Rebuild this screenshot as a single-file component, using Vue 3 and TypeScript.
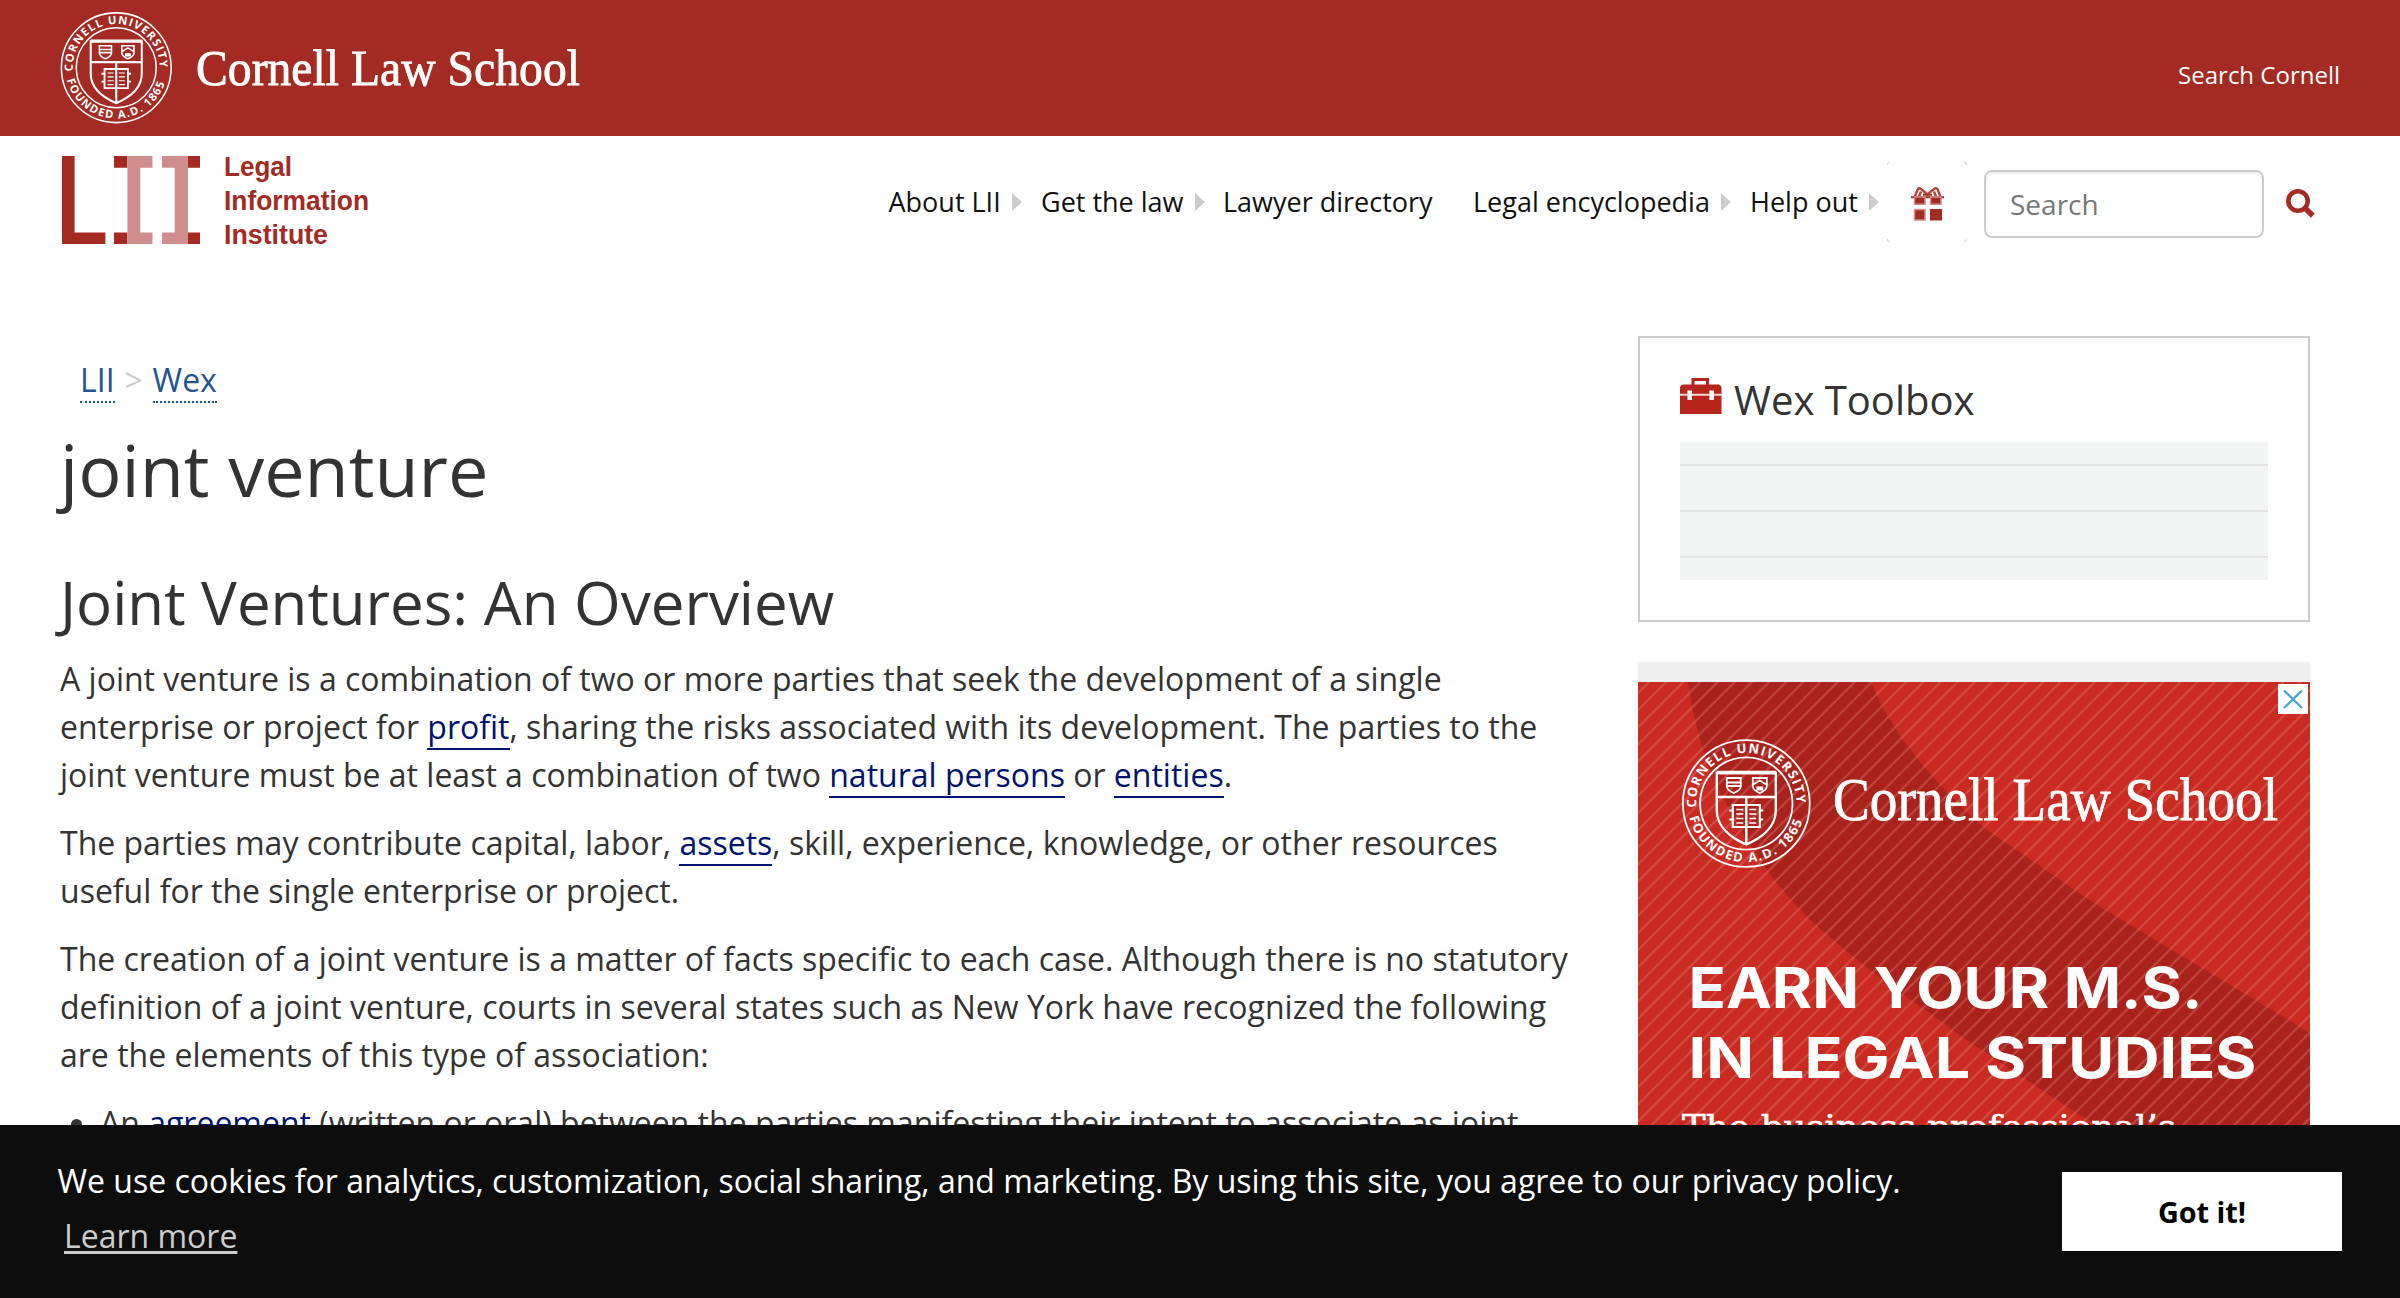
<script setup lang="ts">
interface NavItem { label: string; arrow: boolean; width: number }
const nav: NavItem[] = [
  { label: 'About LII', arrow: true, width: 152.5 },
  { label: 'Get the law', arrow: true, width: 182 },
  { label: 'Lawyer directory', arrow: false, width: 250 },
  { label: 'Legal encyclopedia', arrow: true, width: 277 },
  { label: 'Help out', arrow: true, width: 137 },
]
</script>

<template>
  <div class="page">
    <svg class="defs" width="0" height="0" aria-hidden="true">
      <defs>
        <symbol id="seal" viewBox="-65 -65 130 130">
          <path id="arc-top" d="M-50 4A50.200 50.200 0 1 1 50 4" fill="none" />
          <path id="arc-bottom" d="M-57 14A58.700 58.700 0 0 0 57 14" fill="none" />
          <g fill="none" stroke="#fff">
            <circle r="63.4" stroke-width="1.8" />
            <circle r="46.2" stroke-width="1.8" />
            <path d="M-29.5-30.5H29.5V7C29.5 24 14 35 0 41C-14 35-29.5 24-29.5 7ZM-29.5-6.5H29.5M0-6.5V41" stroke-width="2.4" />
            <path d="M-29.5-31H29.5" stroke-width="3.4" />
            <path d="M-19.5-25.5H-5.5V-17Q-6-13-12.5-10.5Q-19-13-19.5-17ZM-19-21H-6M-19-17.5H-6" stroke-width="1.8" />
            <path d="M6.5-25.5H20.5V-17Q20-13 13.5-10.5Q7-13 6.5-17ZM7-19L13.5-23L20-19M11-16H16V-14H11Z" stroke-width="1.8" />
            <path d="M-13.5 1.5H13.5V23.5H-13.5ZM-17 7H-13.5M-17 16H-13.5M17 7H13.5M17 16H13.5" stroke-width="2.2" />
            <path d="M-10 6H-3M-10 10.500H-3M-10 15H-3M-10 19.500H-3M10 6H3M10 10.500H3M10 15H3M10 19.500H3" stroke-width="1.3" />
          </g>
          <g class="seal-text" fill="#fff">
            <text><textPath href="#arc-top" textLength="162">CORNELL UNIVERSITY</textPath></text>
            <text><textPath href="#arc-bottom" textLength="152">FOUNDED A.D. 1865</textPath></text>
          </g>
        </symbol>
      </defs>
    </svg>

    <header class="topbar">
      <svg class="brand" width="560" height="136" viewBox="0 0 560 136">
        <use href="#seal" x="0" y="11.500" width="112.500" height="112.500" />
        <text class="brand-name" x="136" y="84.500" textLength="384" lengthAdjust="spacingAndGlyphs">Cornell Law School</text>
      </svg>
      <span class="search-cornell">Search Cornell</span>
    </header>

    <div class="navbar">
      <svg class="lii" width="320" height="100" viewBox="60 150 320 100">
        <path fill="#a32b24" d="M62 156h12.600v76.600H105.400V244H62zM114 156h13.400v11.700H114zM114 232.600h13.400V244H114zM188 156h12v11.700h-12zM188 232.600h12V244h-12z" />
        <path fill="#cf8e8d" d="M127.400 156h25.100v11.700H140.300v64.900h12.200V244H127.400zM162 156h26v88h-26v-11.400h12.700v-64.900H162z" />
        <g class="lii-text" fill="#a32b24">
          <text x="224" y="175.600" textLength="68" lengthAdjust="spacingAndGlyphs">Legal</text>
          <text x="224" y="209.600" textLength="145" lengthAdjust="spacingAndGlyphs">Information</text>
          <text x="224" y="243.600" textLength="104" lengthAdjust="spacingAndGlyphs">Institute</text>
        </g>
      </svg>
      <nav class="menu">
        <a v-for="n in nav" :key="n.label" :style="{ width: n.width + 'px' }">
          <span>{{ n.label }}</span><i v-if="n.arrow" class="arrow"></i>
        </a>
      </nav>
      <div class="gift">
        <svg width="80" height="80" viewBox="0 0 80 80">
          <path d="M.5 3V2Q.5.500 2 .500H3M77 .500H78Q79.500.500 79.500 2V3M.5 77V78Q.5 79.500 2 79.500H3M77 79.500H78Q79.500 79.500 79.500 78V77" fill="none" stroke="#f0c8cf" />
          <g transform="translate(24 23)">
            <path d="M3.500 12L7 4Q8 2.500 10 4L16.500 9.500L23 4Q25 2.500 26.500 4L29.500 12M8 11.500L10 6.500M25 11.500L23 6.500" fill="none" stroke="#b5453f" stroke-width="2.400" />
            <path d="M0 12.300H33M12 9.800H21" stroke="#a32b24" stroke-width="2" />
            <path d="M3.500 12h10.500v7.300H3.500zM19.500 12h10.500v7.300H19.500zM3.500 24.500h10.500v10.500H3.500z" fill="#a32b24" stroke="#d28f8b" stroke-width="1.500" />
            <path d="M19 24h12v11.500H19z" fill="#a32b24" />
          </g>
        </svg>
      </div>
      <div class="field">Search</div>
      <svg class="mag" width="30" height="30" viewBox="0 0 30 30">
        <circle cx="12" cy="12" r="9.700" fill="none" stroke="#a32b24" stroke-width="4.600" />
        <path d="M18.500 18.500L26.800 26.800" stroke="#a32b24" stroke-width="5.500" />
      </svg>
    </div>

    <div class="columns">
      <main>
        <div class="crumbs"><a>LII</a><span class="gt">&gt;</span><a>Wex</a></div>
        <h1>joint venture</h1>
        <h2>Joint Ventures: An Overview</h2>
        <p>A joint venture is a combination of two or more parties that seek the development of a single<br />enterprise or project for <a>profit</a>, sharing the risks associated with its development. The parties to the<br />joint venture must be at least a combination of two <a>natural persons</a> or <a>entities</a>.</p>
        <p>The parties may contribute capital, labor, <a>assets</a>, skill, experience, knowledge, or other resources<br />useful for the single enterprise or project.</p>
        <p>The creation of a joint venture is a matter of facts specific to each case. Although there is no statutory<br />definition of a joint venture, courts in several states such as New York have recognized the following<br />are the elements of this type of association:</p>
        <ul>
          <li>An <a>agreement</a> (written or oral) between the parties manifesting their intent to associate as joint</li>
        </ul>
      </main>

      <aside>
        <section class="toolbox">
          <h3>
            <svg width="42" height="36" viewBox="0 0 42 36">
              <path d="M13 8V1.500H27.500V8" fill="none" stroke="#b5251c" stroke-width="3" />
              <path d="M3 6.500H38.500Q41.500 7 41.500 10V36H0V10Q0 7 3 6.500Z" fill="#b5251c" />
              <path d="M0 16.800H42" stroke="#f5d5d3" stroke-width="2" />
              <path d="M9.700 12.500V22M31.700 12.500V22" stroke="#fff" stroke-width="4.500" />
            </svg>
            <span>Wex Toolbox</span>
          </h3>
          <div class="lined"></div>
        </section>
        <section class="ad">
          <svg width="672" height="616" viewBox="1638 682 672 616">
            <defs>
              <pattern id="stripes" width="17.140" height="17.140" patternUnits="userSpaceOnUse">
                <path d="M-2 19.140L19.140-2M-2 2L2-2M15.140 19.140L19.140 15.140" stroke="#e88078" stroke-opacity=".4" stroke-width="2" />
              </pattern>
            </defs>
            <path d="M1638 682H2310V1298H1638Z" fill="#c92a21" />
            <path d="M1688 682C1700 760 1720 800 1767 870C1800 915 1830 938 1870 970L1964 1038L2072 1110C2130 1145 2200 1200 2310 1240V1033L2217 977L2100 907L1987 830C1930 780 1890 730 1871 682Z" fill="#a9221b" />
            <path d="M1638 682H2310V1298H1638Z" fill="url(#stripes)" />
            <use href="#seal" x="1681.300" y="738.500" width="130" height="130" />
            <text class="brand-name ad-name" x="1833" y="820" textLength="445" lengthAdjust="spacingAndGlyphs">Cornell Law School</text>
            <g class="ad-head">
              <text x="1688.500" y="1007.500" textLength="514" lengthAdjust="spacingAndGlyphs">EARN YOUR M.S.</text>
              <text x="1688.500" y="1077.500" textLength="568" lengthAdjust="spacingAndGlyphs">IN LEGAL STUDIES</text>
            </g>
            <text class="ad-sub" x="1682" y="1139" textLength="494" lengthAdjust="spacingAndGlyphs">The business professional’s</text>
            <path d="M2278 684h30v30h-30z" fill="#fff" />
            <path d="M2284 690.500L2302 708M2302 690.500L2284 708" stroke="#45a8cc" stroke-width="2.400" />
          </svg>
        </section>
      </aside>
    </div>

    <div class="cookie">
      <div class="cookie-text">
        <div class="msg">We use cookies for analytics, customization, social sharing, and marketing. By using this site, you agree to our privacy policy.</div>
        <a class="learn">Learn more</a>
      </div>
      <button>Got it!</button>
    </div>
  </div>
</template>

<style>
body { margin: 0; background: #fff; }
</style>

<style scoped>
.page { position: relative; width: 2400px; height: 1298px; overflow: hidden; background: #fff; color: #333; font-family: "Open Sans", "Noto Sans", sans-serif; font-size: 32px; white-space: nowrap; }
.defs { position: absolute; }
svg { display: block; flex: none; overflow: visible; }
.seal-text { font: bold 13px "Open Sans", sans-serif; }
.topbar { display: flex; justify-content: space-between; height: 136px; padding: 0 60px; background: #a32b24; }
.brand-name { font-family: "Liberation Serif", serif; font-size: 50px; fill: #fff; stroke: #fff; stroke-width: .8px; }
.ad-name { font-size: 61px; }
.ad-head { font: 700 56.500px Inter, sans-serif; fill: #fff; }
.ad-sub { font: 33px "DejaVu Serif", serif; fill: #fff; stroke: #fff; stroke-width: .6px; }
.search-cornell { margin-top: 58px; font-size: 24px; line-height: 34px; color: #fff; }
.navbar { display: flex; align-items: flex-start; height: 200px; }
.lii { margin: 14px 0 0 60px; }
.lii-text { font: bold 28px "Liberation Sans", sans-serif; }
.menu { display: flex; flex: none; margin: 48px 0 0 508.500px; color: #111; font-size: 27px; line-height: 36px; }
.menu a { display: flex; align-items: center; flex: none; }
.arrow { width: 0; margin: 0 0 0 11px; border-left: 10px solid #ccc; border-top: 9.500px solid transparent; border-bottom: 9.500px solid transparent; }
.gift { flex: none; width: 80px; height: 80px; margin: 26px 17px 0 0; }
.field { flex: none; box-sizing: border-box; width: 280px; height: 68px; margin-top: 34px; padding-left: 24px; border: 2px solid #ccc; border-radius: 8px; box-shadow: inset 0 2px 2px rgba(0,0,0,.075); color: #777; font-size: 28px; line-height: 64px; }
.mag { margin: 53px 0 0 22px; }
.columns { display: flex; }
main { flex: none; box-sizing: content-box; width: 1578px; padding-left: 60px; }
.crumbs { display: flex; margin-top: 22px; padding-left: 20px; line-height: 44px; color: #1f568f; }
.crumbs a { height: 43px; border-bottom: 2px dotted #1f568f; }
.gt { width: 38px; text-align: center; color: #ccc; }
h1, h2, h3, p, ul { margin: 0; font-weight: 400; }
h1 { margin-top: 17px; font-size: 72px; line-height: 98px; }
h2 { margin-top: 44px; margin-bottom: 13px; font-size: 60px; line-height: 80px; }
p, ul { margin-bottom: 20px; line-height: 48px; }
p a, li a { color: #00136f; border-bottom: 2px solid #00136f; }
ul { padding-left: 40px; list-style: disc; }
aside { flex: none; width: 672px; }
.toolbox { box-sizing: border-box; height: 286px; padding: 40px 40px 0; border: 2px solid #ccc; }
h3 { display: flex; height: 64px; font-size: 40px; line-height: 44px; }
h3 span { margin-left: 12px; }
.lined { height: 138px; background: repeating-linear-gradient(#f3f5f4 0 22px, #e3e4e3 22px 24px, #f3f5f4 24px 46px); }
.ad { margin-top: 40px; padding-top: 20px; background: #efefef; }
.cookie { position: absolute; left: 0; right: 0; bottom: 0; display: flex; box-sizing: border-box; height: 173px; background: #0d0d0d; color: #fff; }
.cookie-text { flex: 1; padding: 29px 0 0 57.500px; line-height: 54px; }
.learn { display: inline-block; margin: 1px 0 0 6.500px; color: #ccc; text-decoration: underline; text-underline-offset: 3px; text-decoration-thickness: 3px; }
button { width: 280px; height: 79px; margin: 47px 58px 0 0; padding: 0; border: 0; background: #fff; color: #000; font: bold 28.800px "Open Sans", sans-serif; }
</style>
